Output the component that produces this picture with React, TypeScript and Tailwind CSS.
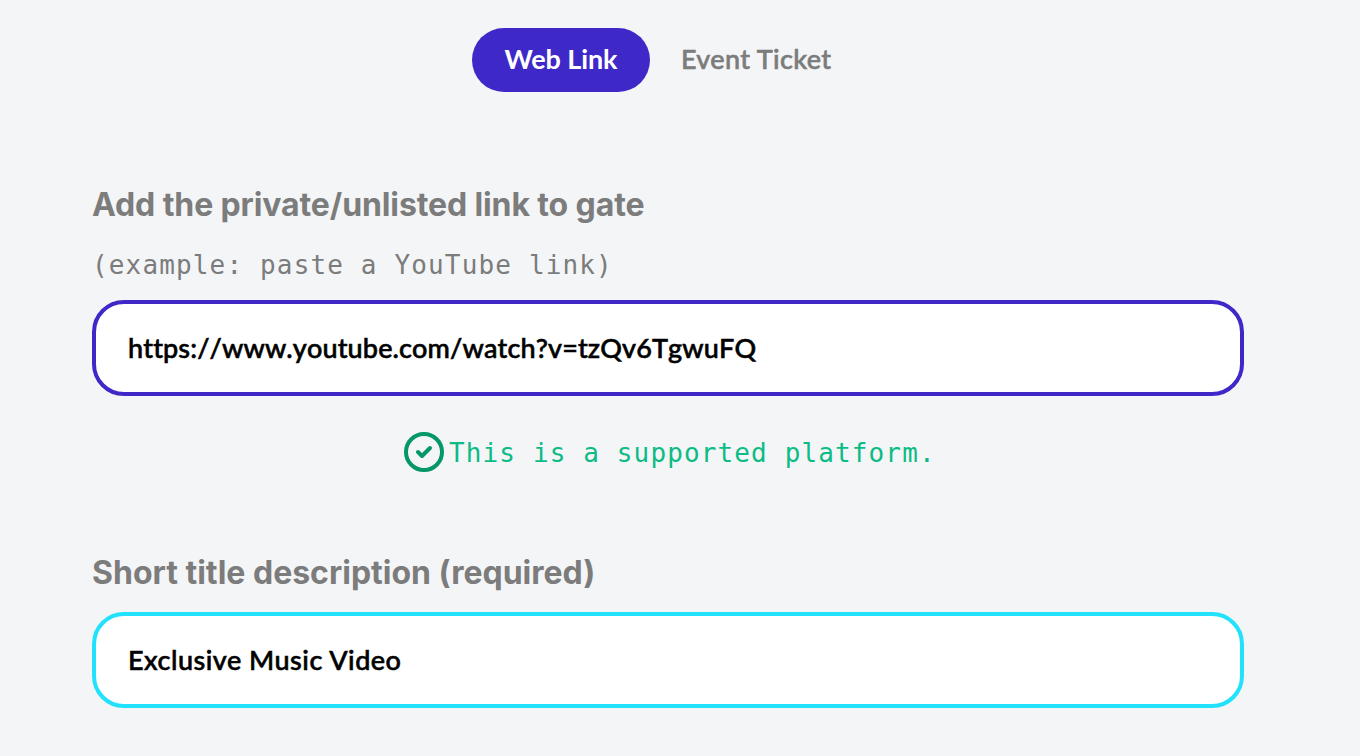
import React from "react";

type FieldProps = { id: string; value: string; border: string; font: string };

function Field({ id, value, border, font }: FieldProps) {
  return (
    <input
      id={id}
      defaultValue={value}
      className={`block h-24 w-full rounded-[32px] border-4 bg-white px-8 pb-0.5 text-black outline-none font-['Lato','Noto_Sans',sans-serif] font-medium [-webkit-text-stroke:0.6px_currentColor] [font-variant-ligatures:none] ${border} ${font}`}
    />
  );
}

export default function App() {
  return (
    <main className="h-[756px] w-full overflow-hidden bg-[#f4f5f7] pt-7 pr-[116px] pl-[92px] text-[#7b7c7b]">
      <nav className="-mr-4 flex h-16 items-center pl-[380px] font-['Lato',sans-serif] text-[27px]">
        <button className="h-16 w-[178px] rounded-full bg-[#3f28c8] pb-0.5 tracking-[-0.1px] whitespace-nowrap font-bold text-white">
          Web Link
        </button>
        <button className="ml-[31px] pb-0.5 tracking-[0.35px] whitespace-nowrap font-medium [-webkit-text-stroke:0.6px_currentColor]">Event Ticket</button>
      </nav>
      <section className="mt-[93px] font-['Inter',sans-serif]">
        <label htmlFor="link" className="block h-10 text-[32px] leading-10 font-bold tracking-[-0.11px] whitespace-nowrap">
          Add the private/unlisted link to gate
        </label>
        <p className="mt-5 h-10 font-['DejaVu_Sans_Mono',monospace] text-[26px] leading-10 tracking-[1.15px] whitespace-nowrap">
          (example: paste a YouTube link)
        </p>
        <div className="mt-[15px]">
          <Field id="link" value="https://www.youtube.com/watch?v=tzQv6TgwuFQ" border="border-[#3f28c8]" font="text-[27px] tracking-[0.13px] [font-kerning:none]" />
        </div>
        <div className="mt-9 flex h-10 items-center pl-[312px] text-[#0cbb85]">
          <svg className="size-10 shrink-0" viewBox="0 0 40 40" fill="none" stroke="#059669" strokeWidth="4">
            <circle cx="20" cy="20" r="18" />
            <path d="m14 20 4 4 8-8" strokeLinecap="round" strokeLinejoin="round" />
          </svg>
          <span className="ml-[5px] pt-0.5 font-['DejaVu_Sans_Mono',monospace] text-[26px] leading-10 tracking-[1.13px] whitespace-nowrap">This is a supported platform.</span>
        </div>
      </section>
      <section className="mt-[81px] font-['Inter',sans-serif]">
        <label htmlFor="title" className="mb-[19px] block h-10 text-[32px] leading-10 font-bold whitespace-nowrap">
          Short title description (required)
        </label>
        <Field id="title" value="Exclusive Music Video" border="border-[#22e1fd]" font="text-[27px] tracking-[0.5px]" />
      </section>
    </main>
  );
}
